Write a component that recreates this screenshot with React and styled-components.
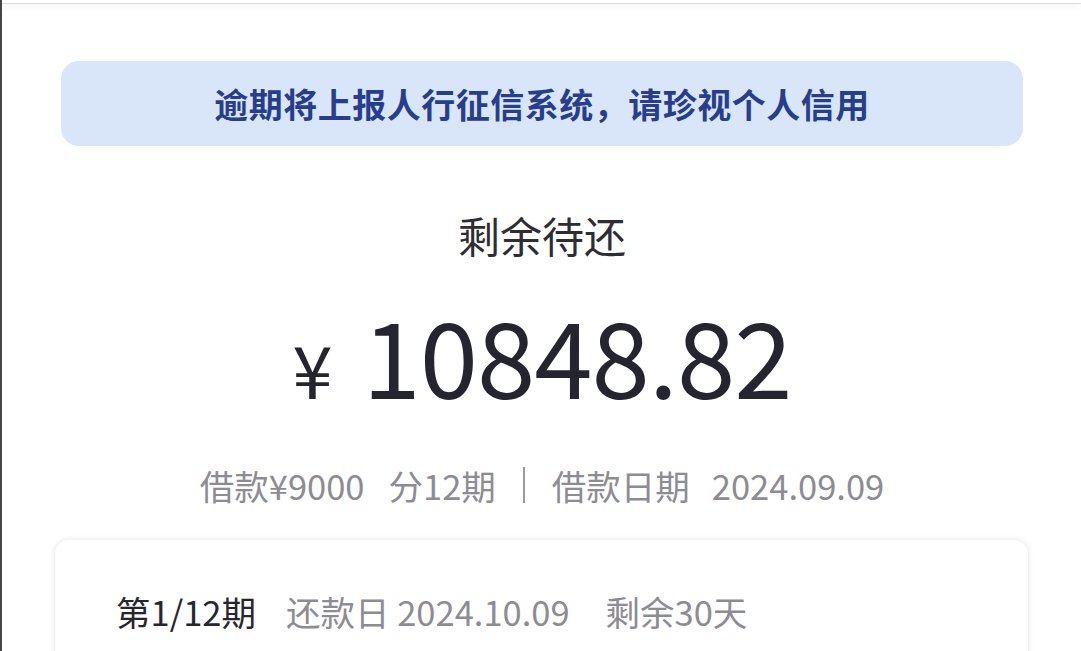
import React from 'react'
import styled, { createGlobalStyle } from 'styled-components'

const GlobalStyle = createGlobalStyle`
  html, body {
    margin: 0;
    padding: 0;
    background: #ffffff;
  }
  body {
    font-family: "Noto Sans CJK SC", "Noto Sans", sans-serif;
  }
`

const Page = styled.div`
  width: 1081px;
  height: 651px;
  box-sizing: border-box;
  border-left: 2px solid #454545;
  overflow: hidden;
  background: #ffffff;
`

const TopBar = styled.div`
  height: 3px;
  border-bottom: 1px solid #dedede;
  box-shadow: 0 2px 6px rgba(0, 0, 0, 0.06);
`

const Content = styled.div`
  display: flex;
  flex-direction: column;
  align-items: center;
  padding: 57px 58px 0 59px;
`

const Notice = styled.div`
  align-self: stretch;
  height: 85px;
  display: flex;
  align-items: center;
  justify-content: center;
  background: #d9e6f9;
  border-radius: 18px;
  color: #283e8c;
  font-size: 34px;
  font-weight: 700;
  letter-spacing: 0.5px;
`

const Title = styled.div`
  margin-top: 61px;
  font-size: 42px;
  color: #2d2d33;
  line-height: 56px;
`

const Amount = styled.div`
  margin-top: 30px;
  display: flex;
  align-items: baseline;
  color: #25252f;
  line-height: 120px;
`

const Currency = styled.span`
  font-size: 72px;
  margin-right: 30px;
`

const Number = styled.span`
  font-size: 105px;
  letter-spacing: -1px;
`

const Meta = styled.div`
  margin-top: 32px;
  display: flex;
  align-items: center;
  gap: 27px;
  font-size: 34.5px;
  color: #8c8c92;
  line-height: 50px;
`

const Group = styled.span`
  display: flex;
  gap: ${props => props.gap || '24px'};
`

const Divider = styled.span`
  width: 2px;
  height: 36px;
  background: #9a9a9e;
`

const Card = styled.div`
  align-self: stretch;
  margin: 30px -5px 0 -6px;
  height: 160px;
  background: #ffffff;
  border-radius: 14px;
  box-shadow: 0 0 6px rgba(0, 0, 0, 0.12);
  padding: 46px 0 0 61px;
  box-sizing: border-box;
  display: flex;
  align-items: baseline;
  font-size: 34.5px;
  line-height: 50px;
  color: #8c8c92;
`

const Period = styled.span`
  color: #26262e;
  margin-right: 30px;
`

const Remain = styled.span`
  margin-left: 36px;
`

export default function App() {
  return (
    <Page>
      <GlobalStyle />
      <TopBar />
      <Content>
        <Notice>逾期将上报人行征信系统，请珍视个人信用</Notice>
        <Title>剩余待还</Title>
        <Amount>
          <Currency>¥</Currency>
          <Number>10848.82</Number>
        </Amount>
        <Meta>
          <Group gap="24px">
            <span>借款¥9000</span>
            <span>分12期</span>
          </Group>
          <Divider />
          <Group gap="22px">
            <span>借款日期</span>
            <span>2024.09.09</span>
          </Group>
        </Meta>
        <Card>
          <Period>第1/12期</Period>
          <span>还款日 2024.10.09</span>
          <Remain>剩余30天</Remain>
        </Card>
      </Content>
    </Page>
  )
}
